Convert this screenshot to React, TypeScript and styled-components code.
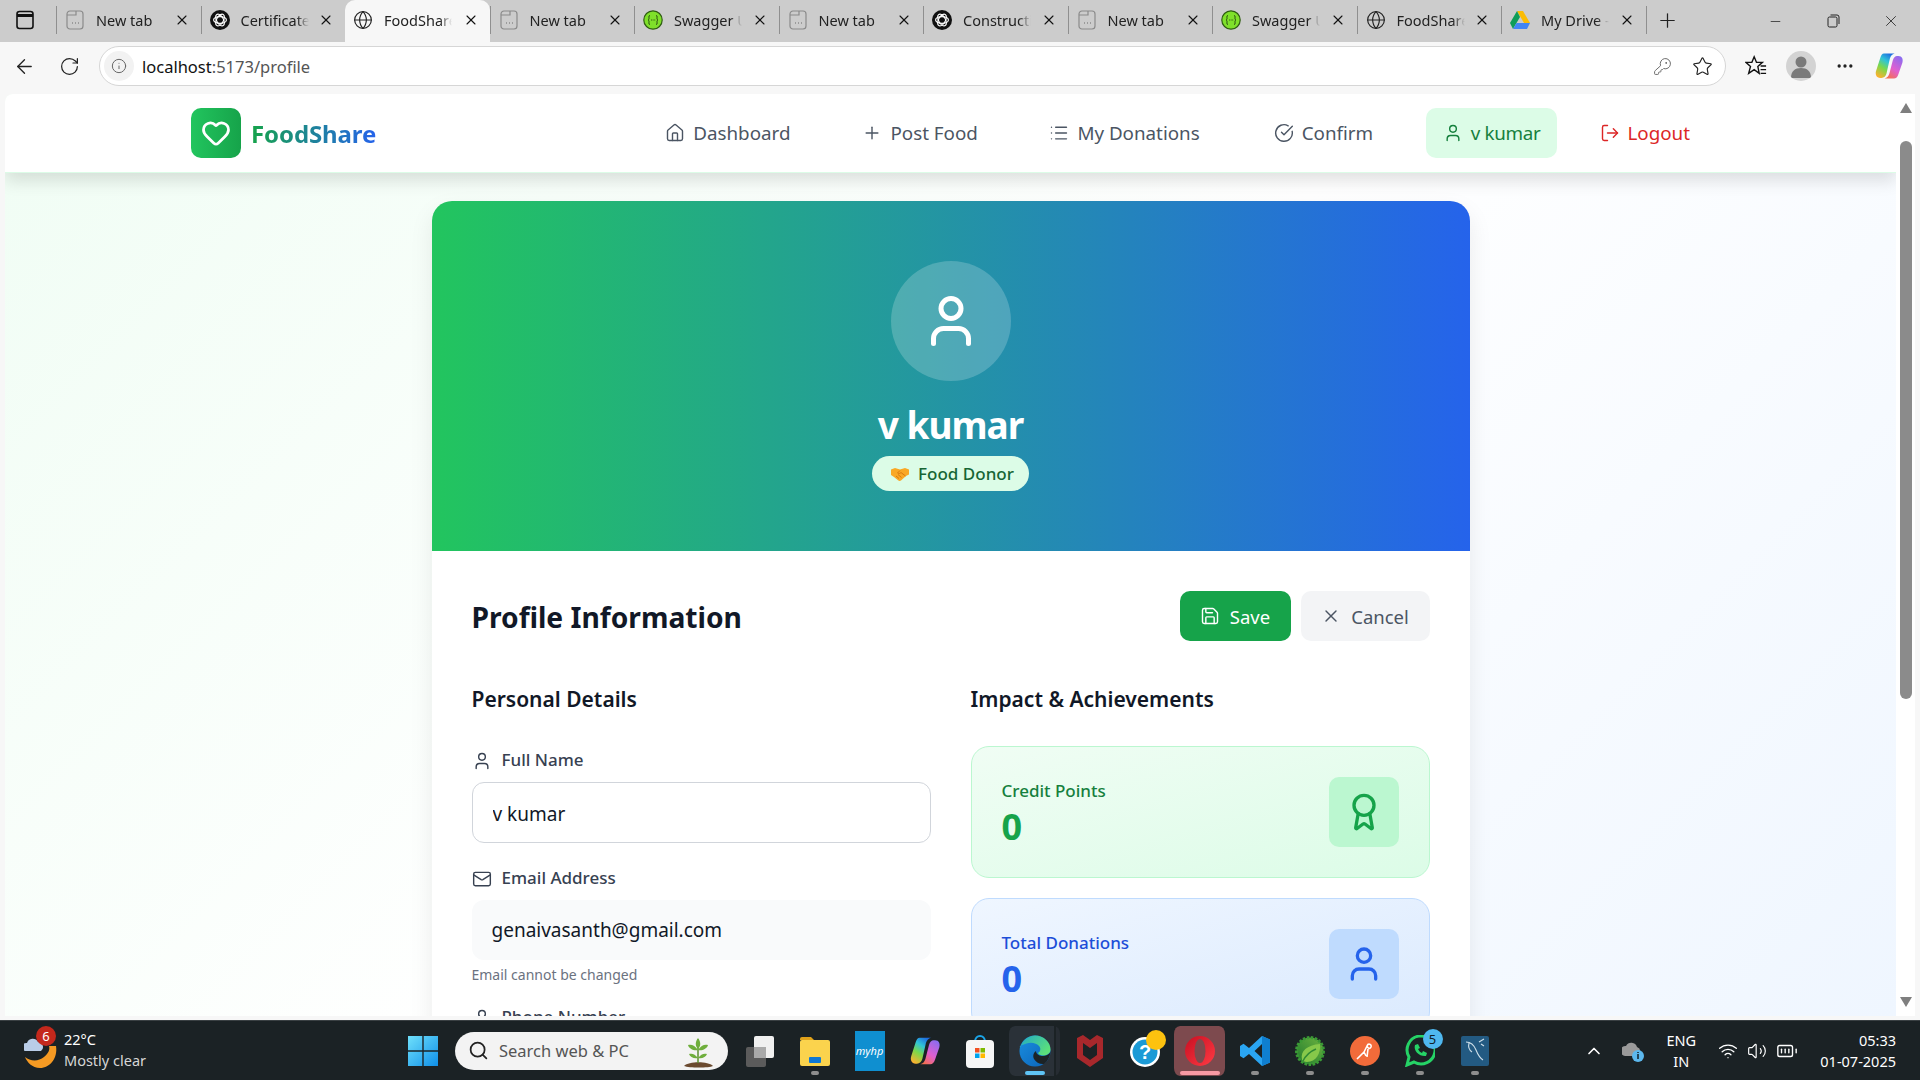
import styled, { createGlobalStyle } from "styled-components";
import {
    ArrowLeft, Award, BatteryFull, ChevronUp, CircleCheckBig, Ellipsis, Globe, Heart, House, Info,
    KeyRound, List, LogOut, Mail, Minus, Plus, RotateCw, Save, Search, Star, User, Volume2, Wifi, X,
} from "lucide-react";
import type { ReactNode } from "react";

const GlobalStyle = createGlobalStyle`
    html, body {
        margin: 0;
        height: 100%;
        overflow: hidden;
        background: #f7f7f7;
        font-family: "Noto Sans", "Liberation Sans", sans-serif;
    }
    * { box-sizing: border-box; }
`;

const DocIcon = () => (
    <svg width="18" height="20" viewBox="0 0 18 20" fill="none" stroke="#8a8a8a" strokeWidth="1.2">
        <rect x="1" y="1" width="16" height="18" rx="3" />
        <path d="M1 5h9V1" />
        <path d="M6 13h1M9 13h1M12 13h1" strokeWidth="1.6" />
    </svg>
);

const OpenAiIcon = () => (
    <svg width="20" height="20" viewBox="0 0 20 20">
        <circle cx="10" cy="10" r="10" fill="#111" />
        <g fill="none" stroke="#fff" strokeWidth="1.2">
            <ellipse cx="10" cy="10" rx="6.4" ry="3.4" />
            <ellipse cx="10" cy="10" rx="6.4" ry="3.4" transform="rotate(60 10 10)" />
            <ellipse cx="10" cy="10" rx="6.4" ry="3.4" transform="rotate(120 10 10)" />
        </g>
    </svg>
);

const SwaggerIcon = () => (
    <svg width="20" height="20" viewBox="0 0 20 20">
        <circle cx="10" cy="10" r="9.2" fill="#7fe02a" stroke="#2f5d12" strokeWidth="1.2" />
        <path d="M7 5.5c-1.5 0-1 2-1 3s-1 1.500-1 1.500 1 .5 1 1.500-.5 3 1 3M13 5.500c1.500 0 1 2 1 3s1 1.500 1 1.500-1 .5-1 1.500.5 3-1 3" fill="none" stroke="#24400f" strokeWidth="1" />
        <path d="M8 10h.8M9.700 10h.8M11.400 10h.8" stroke="#24400f" strokeWidth="1" />
    </svg>
);

const DriveIcon = () => (
    <svg width="20" height="18" viewBox="0 0 20 18">
        <path d="M7 0h6l7 12h-6z" fill="#fbbc04" />
        <path d="M7 0l-7 12 3 6 7-12z" fill="#0f9d58" />
        <path d="M3 18h14l3-6H6.500z" fill="#4285f4" />
    </svg>
);

const CopilotIcon = ({ size }: { size: number }) => (
    <svg width={size} height={size} viewBox="0 0 24 24">
        <defs>
            <linearGradient id={`cpa${size}`} x1="0.7" y1="0" x2="0.2" y2="1">
                <stop offset="0" stopColor="#1f6fe0" />
                <stop offset="0.3" stopColor="#2fc4d8" />
                <stop offset="0.6" stopColor="#7bd84a" />
                <stop offset="1" stopColor="#ffb02e" />
            </linearGradient>
            <linearGradient id={`cpb${size}`} x1="0.8" y1="0" x2="0.2" y2="1">
                <stop offset="0" stopColor="#8a6cf0" />
                <stop offset="0.55" stopColor="#e05fd0" />
                <stop offset="1" stopColor="#f5704a" />
            </linearGradient>
        </defs>
        <path d="M8 2h8.500c-2 .5-3.200 2-3.800 4L10 18c-.5 2-2 3.500-4 3.500H5c-3 0-4.300-3-3.300-5.800L5 5.500C5.600 3.500 6.500 2 8 2z" fill={`url(#cpa${size})`} />
        <path d="M16 22H8.500c2-.5 3.200-2 3.800-4L15 7.500C15.500 5.500 17 4 18.500 4h1c3 0 4 2.700 3.200 5.300L19.500 18.500C19 20.500 17.500 22 16 22z" fill={`url(#cpb${size})`} />
    </svg>
);

const HandshakeIcon = () => (
    <svg width="18" height="14" viewBox="0 0 18 14">
        <path d="M0 2.500 4 1l5 1.500L14 1l4 1.500v5L15 9l-5 4.500c-1 .7-2 .5-3-.2L3 10 0 8z" fill="#f9a825" />
        <path d="M5 9l3 2.500M7 7.500l3.500 3M9 3.500 6.500 6c1 1 2.500.5 3.500-.5l4.500 3.500" fill="none" stroke="#d9790f" strokeWidth="1" />
    </svg>
);

const tabs: { title: string; icon: ReactNode; active?: boolean }[] = [
    { title: "New tab", icon: <DocIcon /> },
    { title: "Certificate", icon: <OpenAiIcon /> },
    { title: "FoodShare", icon: <Globe size={20} strokeWidth={1.4} color="#222" />, active: true },
    { title: "New tab", icon: <DocIcon /> },
    { title: "Swagger UI", icon: <SwaggerIcon /> },
    { title: "New tab", icon: <DocIcon /> },
    { title: "Construction", icon: <OpenAiIcon /> },
    { title: "New tab", icon: <DocIcon /> },
    { title: "Swagger UI", icon: <SwaggerIcon /> },
    { title: "FoodShare", icon: <Globe size={20} strokeWidth={1.4} color="#222" /> },
    { title: "My Drive - Google", icon: <DriveIcon /> },
];

function BrowserChrome() {
    return (
        <>
            <TabStrip>
                <SidebarToggle>
                    <svg width="18" height="20" viewBox="0 0 18 20" fill="none" stroke="#111" strokeWidth="1.6">
                        <rect x="1" y="1.500" width="16" height="17" rx="2.500" />
                        <path d="M1 5.500h16" strokeWidth="3" />
                    </svg>
                </SidebarToggle>
                {tabs.map((tab, i) => (
                    <Tab key={i} $active={tab.active}>
                        <TabIcon>{tab.icon}</TabIcon>
                        <TabTitle>{tab.title}</TabTitle>
                        <TabClose><X size={16} strokeWidth={1.6} /></TabClose>
                    </Tab>
                ))}
                <NewTab><Plus size={23} strokeWidth={1.3} /></NewTab>
                <WindowControls>
                    <WindowButton><Minus size={15} strokeWidth={1.2} /></WindowButton>
                    <WindowButton>
                        <svg width="13" height="14" viewBox="0 0 13 14" fill="none" stroke="#222" strokeWidth="1">
                            <rect x="1" y="3" width="9" height="10" rx="1.500" />
                            <path d="M3.500 1h6.500a2 2 0 0 1 2 2v7" />
                        </svg>
                    </WindowButton>
                    <WindowButton><X size={18} strokeWidth={1.1} /></WindowButton>
                </WindowControls>
            </TabStrip>
            <Toolbar>
                <ToolButton><ArrowLeft size={23} strokeWidth={1.4} /></ToolButton>
                <ToolButton><RotateCw size={21} strokeWidth={1.4} /></ToolButton>
                <AddressBar>
                    <SiteInfo><Info size={16} strokeWidth={1.5} color="#666" /></SiteInfo>
                    <AddressText>localhost<AddressPath>:5173/profile</AddressPath></AddressText>
                    <AddressActions>
                        <KeyRound size={19} strokeWidth={1.2} color="#666" />
                        <Star size={21} strokeWidth={1.3} color="#222" />
                    </AddressActions>
                </AddressBar>
                <ToolIcons>
                    <svg width="22" height="22" viewBox="0 0 24 24" fill="none" stroke="#111" strokeWidth="1.5">
                        <path d="M10 2l2.500 6H19l-5 4.500L15.500 20 10 16l-6 4 2-7.500L1 8h6.500z" />
                        <path d="M17 12h6M17 16h6M17 20h6" />
                    </svg>
                    <Avatar>
                        <svg width="30" height="30" viewBox="0 0 30 30">
                            <circle cx="15" cy="11" r="5.500" fill="#7a7a7a" />
                            <path d="M5 27c0-7 4-10 10-10s10 3 10 10z" fill="#7a7a7a" />
                        </svg>
                    </Avatar>
                    <Ellipsis size={20} color="#222" />
                    <CopilotIcon size={30} />
                </ToolIcons>
            </Toolbar>
        </>
    );
}

function NavBar() {
    return (
        <Nav>
            <Brand>
                <BrandMark><Heart size={30} color="#fff" strokeWidth={2.2} /></BrandMark>
                <BrandName>FoodShare</BrandName>
            </Brand>
            <NavLinks>
                <NavLink $shift={0}><House size={20} strokeWidth={1.7} />Dashboard</NavLink>
                <NavLink $shift={0}><Plus size={20} strokeWidth={1.7} />Post Food</NavLink>
                <NavLink $shift={-0.5}><List size={20} strokeWidth={1.7} />My Donations</NavLink>
                <NavLink $shift={2}><CircleCheckBig size={20} strokeWidth={1.7} />Confirm</NavLink>
                <NavLink $shift={-1} $current><User size={20} strokeWidth={1.7} />v kumar</NavLink>
                <NavLink $shift={-11.5} $danger><LogOut size={20} strokeWidth={1.7} />Logout</NavLink>
            </NavLinks>
        </Nav>
    );
}

function ProfileCard() {
    return (
        <Card>
            <Hero>
                <HeroAvatar><User size={60} color="#fff" strokeWidth={2} /></HeroAvatar>
                <HeroName>v kumar</HeroName>
                <RoleBadge><HandshakeIcon />Food Donor</RoleBadge>
            </Hero>
            <CardBody>
                <InfoHead>
                    <InfoTitle>Profile Information</InfoTitle>
                    <Actions>
                        <SaveButton><Save size={20} strokeWidth={1.7} />Save</SaveButton>
                        <CancelButton><X size={20} strokeWidth={1.7} />Cancel</CancelButton>
                    </Actions>
                </InfoHead>
                <Columns>
                    <Column>
                        <SectionTitle>Personal Details</SectionTitle>
                        <Field>
                            <FieldLabel><User size={20} strokeWidth={1.7} />Full Name</FieldLabel>
                            <TextInput readOnly value="v kumar" />
                        </Field>
                        <Field>
                            <FieldLabel><Mail size={20} strokeWidth={1.7} />Email Address</FieldLabel>
                            <TextInput readOnly disabled value="genaivasanth@gmail.com" />
                            <Hint>Email cannot be changed</Hint>
                        </Field>
                        <Field>
                            <FieldLabel><User size={20} strokeWidth={1.7} />Phone Number</FieldLabel>
                        </Field>
                    </Column>
                    <Column>
                        <SectionTitle>Impact &amp; Achievements</SectionTitle>
                        <StatList>
                            <StatCard $tone="green">
                                <StatText>
                                    <StatLabel $tone="green">Credit Points</StatLabel>
                                    <StatValue $tone="green">0</StatValue>
                                </StatText>
                                <StatIcon $tone="green"><Award size={40} strokeWidth={2} /></StatIcon>
                            </StatCard>
                            <StatCard $tone="blue">
                                <StatText>
                                    <StatLabel $tone="blue">Total Donations</StatLabel>
                                    <StatValue $tone="blue">0</StatValue>
                                </StatText>
                                <StatIcon $tone="blue"><User size={40} strokeWidth={2} /></StatIcon>
                            </StatCard>
                        </StatList>
                    </Column>
                </Columns>
            </CardBody>
        </Card>
    );
}

function Taskbar() {
    return (
        <Bar>
            <Weather>
                <WeatherIcon>
                    <svg width="34" height="38" viewBox="0 0 34 38">
                        <path d="M32 14c2 12-6 22-16 22C8 36 3 30 1 25c5 4 13 5 19 0 5-4 6-8 5-11z" fill="#f59a23" />
                        <path d="M2 19a4 4 0 0 1 1-8 6 6 0 0 1 11-1 5 5 0 0 1 3 9z" fill="#b9cde8" />
                    </svg>
                    <CountBadge $color="#c4281c">6</CountBadge>
                </WeatherIcon>
                <WeatherText>
                    <span>22°C</span>
                    <WeatherNote>Mostly clear</WeatherNote>
                </WeatherText>
            </Weather>
            <TaskSlot>
                <svg width="30" height="30" viewBox="0 0 30 30">
                    <defs>
                        <linearGradient id="win" x1="0" y1="0" x2="1" y2="1">
                            <stop offset="0" stopColor="#6fe0fb" />
                            <stop offset="1" stopColor="#0f8fe8" />
                        </linearGradient>
                    </defs>
                    <path d="M0 0h14.300v14.300H0zM15.700 0H30v14.300H15.700zM0 15.700h14.300V30H0zM15.700 15.700H30V30H15.700z" fill="url(#win)" />
                </svg>
            </TaskSlot>
            <SearchPill>
                <Search size={21} strokeWidth={2} color="#222" />
                <SearchText>Search web &amp; PC</SearchText>
                <svg width="36" height="36" viewBox="0 0 36 36">
                    <path d="M4 33c5-5 24-5 29 0-4 2-24 2-29 0z" fill="#6b4a2f" />
                    <path d="M18 30V6" stroke="#5c8f2f" strokeWidth="1.500" />
                    <path d="M18 5c-3 4-3 8 0 11 3-3 3-7 0-11zM18 17c-3-5-7-6-10-5 1 4 6 6 10 5zM18 17c3-5 7-6 10-5-1 4-6 6-10 5zM18 25c-3-4-6-5-9-4 1 3 5 5 9 4zM18 25c3-4 6-5 9-4-1 3-5 5-9 4z" fill="#6fae3c" />
                </svg>
            </SearchPill>
            <TaskSlot>
                <svg width="30" height="32" viewBox="0 0 30 32">
                    <rect x="1" y="12" width="20" height="20" rx="2" fill="#5b5b5b" />
                    <rect x="9" y="1" width="20" height="22" rx="2" fill="#f0f0f0" />
                    <rect x="9" y="12" width="12" height="11" fill="#a9a9a9" />
                </svg>
            </TaskSlot>
            <TaskSlot $dot>
                <svg width="30" height="30" viewBox="0 0 30 30">
                    <path d="M0 3a2 2 0 0 1 2-2h9l3 3h-14z" fill="#e0a21a" />
                    <rect y="4" width="30" height="26" rx="2" fill="#fbd34d" />
                    <rect x="9" y="21" width="12" height="6" rx="1" fill="#0f78d4" />
                </svg>
            </TaskSlot>
            <TaskSlot>
                <HpTile>myhp</HpTile>
            </TaskSlot>
            <TaskSlot><CopilotIcon size={32} /></TaskSlot>
            <TaskSlot>
                <svg width="28" height="34" viewBox="0 0 28 34">
                    <path d="M9 8c0-8 10-8 10 0" fill="none" stroke="#1aa5e8" strokeWidth="2" />
                    <rect y="6" width="28" height="28" rx="4" fill="#f6f6f6" />
                    <path d="M9 14h4.500v4.500H9z" fill="#f25022" />
                    <path d="M14.500 14H19v4.500h-4.500z" fill="#7fba00" />
                    <path d="M9 19.500h4.500V24H9z" fill="#00a4ef" />
                    <path d="M14.500 19.500H19V24h-4.500z" fill="#ffb900" />
                </svg>
            </TaskSlot>
            <TaskSlot $box="linear-gradient(to right, #2a3138 0 45px, #1b2225 45px 47px, #262c32 47px 100%)" $bar="#5fc4f5" $barWidth={20}>
                <svg width="32" height="32" viewBox="0 0 32 32">
                    <defs>
                        <linearGradient id="edgeBlue" x1="0" y1="0" x2="1" y2="1">
                            <stop offset="0" stopColor="#1a8fe0" />
                            <stop offset="1" stopColor="#0b63b8" />
                        </linearGradient>
                        <linearGradient id="edgeGreen" x1="0" y1="0" x2="1" y2="0.600">
                            <stop offset="0" stopColor="#1fa8c8" />
                            <stop offset="1" stopColor="#5ce07a" />
                        </linearGradient>
                    </defs>
                    <circle cx="16" cy="16" r="15.500" fill="url(#edgeBlue)" />
                    <path d="M1.500 12C4 4 11 .500 16 .500c9 0 15.500 7 15.500 14 0 3.500-3 6-7 6-3 0-5-1-5.500-2.500 2.500-1.500 3-4.500 1.500-6.500-3-4-9-4.500-13-3-3 1-6 2-7 3.500z" fill="url(#edgeGreen)" />
                    <path d="M31.500 17c-2 3.500-7 5-11 3.500-2-.8-3.500-2.500-3.500-4.500-2.500 1.500-3.500 5-2 8 2 3.500 6 5.500 10 5 3.500-2.500 5.800-7 6.500-12z" fill="#1c2326" />
                </svg>
            </TaskSlot>
            <TaskSlot>
                <svg width="26" height="32" viewBox="0 0 26 32">
                    <path d="M0 3 6 0l7 5 7-5 6 3v20L13 32 0 23zM6 8v12l7 5 7-5V8l-7 5z" fill="#a8282c" />
                </svg>
            </TaskSlot>
            <TaskSlot>
                <HelpIcon>
                    <svg width="30" height="32" viewBox="0 0 30 32">
                        <circle cx="15" cy="17" r="15" fill="#fff" />
                        <circle cx="15" cy="17" r="12.500" fill="#1b9ad6" />
                        <text x="15" y="24" textAnchor="middle" fontSize="20" fontWeight="700" fontFamily="Liberation Sans" fill="#fff">?</text>
                    </svg>
                    <HelpDot />
                </HelpIcon>
            </TaskSlot>
            <TaskSlot $box="#7d4a4e" $bar="#f79aa4" $barWidth={40}>
                <svg width="30" height="30" viewBox="0 0 30 30">
                    <defs>
                        <linearGradient id="opera" x1="0" y1="0" x2="1" y2="1">
                            <stop offset="0" stopColor="#c80f22" />
                            <stop offset="1" stopColor="#ff3b44" />
                        </linearGradient>
                    </defs>
                    <circle cx="15" cy="15" r="15" fill="url(#opera)" />
                    <ellipse cx="15" cy="15" rx="5.500" ry="12" fill="#7d4a4e" />
                </svg>
            </TaskSlot>
            <TaskSlot $dot>
                <svg width="30" height="30" viewBox="0 0 30 30">
                    <path d="M22 0l8 3.500v23L22 30 9 18l-5.500 4.200L0 20v-10l3.500-2.200L9 12zM22 8l-7.500 7 7.500 7z" fill="#2aa5f2" />
                    <path d="M22 0l8 3.500v23L22 30z" fill="#0f7fd0" />
                </svg>
            </TaskSlot>
            <TaskSlot $dot>
                <svg width="30" height="30" viewBox="0 0 30 30">
                    <defs>
                        <linearGradient id="spring" x1="1" y1="0" x2="0" y2="1">
                            <stop offset="0" stopColor="#6cb33f" />
                            <stop offset="1" stopColor="#1f7a2e" />
                        </linearGradient>
                    </defs>
                    <circle cx="15" cy="15" r="13.500" fill="url(#spring)" stroke="#3a9a35" strokeWidth="3" strokeDasharray="2.500 1.500" />
                    <path d="M7 24c-2-9 5-15 18-16 1 9-4 18-13 18-2 0-4-1-5-2z" fill="#86c84a" />
                    <path d="M8 25c3-6 8-10 13-12" stroke="#2f8a34" strokeWidth="1.500" fill="none" />
                </svg>
            </TaskSlot>
            <TaskSlot $dot>
                <svg width="30" height="30" viewBox="0 0 30 30">
                    <circle cx="15" cy="15" r="15" fill="#f26b3a" />
                    <path d="M7 23l7-7 3-6M17 10c1-3 5-2 4 1-1 2-3 2-4-1zM14 16l2 4M18 13l-1 8" stroke="#fff" strokeWidth="1.600" fill="none" />
                </svg>
            </TaskSlot>
            <TaskSlot $dot>
                <WhatsAppIcon>
                    <svg width="30" height="32" viewBox="0 0 30 32">
                        <path d="M2 30l2-8A14 14 0 1 1 9 27z" fill="none" stroke="#25d366" strokeWidth="3" />
                        <path d="M10 10c-2 6 5 12 11 11l1-3-4-2-1 2c-2-1-3-2-4-4l2-1-2-4z" fill="#25d366" />
                    </svg>
                    <CountBadge $color="#4fb8f0" $dark>5</CountBadge>
                </WhatsAppIcon>
            </TaskSlot>
            <TaskSlot $dot>
                <svg width="28" height="30" viewBox="0 0 28 30">
                    <rect width="28" height="30" rx="2" fill="#235a82" />
                    <path d="M5 6c5 0 8 3 10 8s4 8 7 10M8 7c-1 4 0 7 3 9M18 6l5-3M20 8l3 2" stroke="#cfe0ea" strokeWidth="1.100" fill="none" />
                </svg>
            </TaskSlot>
            <Tray>
                <ChevronUp size={20} color="#fff" strokeWidth={2} />
                <CloudInfo>
                    <svg width="24" height="24" viewBox="0 0 24 24">
                        <path d="M3 17a5 5 0 0 1 1-10 6 6 0 0 1 11 1 5 5 0 0 1 1 9z" fill="#9a9a9a" />
                        <circle cx="16" cy="17" r="6" fill="#5cb8ee" />
                        <path d="M16 15v5M16 13v1" stroke="#10202a" strokeWidth="1.500" />
                    </svg>
                </CloudInfo>
                <Lang>ENG<br />IN</Lang>
                <TrayIcons>
                    <Wifi size={20} color="#fff" strokeWidth={1.6} />
                    <Volume2 size={20} color="#fff" strokeWidth={1.4} />
                    <BatteryFull size={22} color="#fff" strokeWidth={1.5} />
                </TrayIcons>
                <Clock>05:33<br />01-07-2025</Clock>
            </Tray>
        </Bar>
    );
}

export default function App() {
    return (
        <>
            <GlobalStyle />
            <Screen>
                <BrowserChrome />
                <Viewport>
                    <Page>
                        <NavBar />
                        <Content><ProfileCard /></Content>
                    </Page>
                    <ScrollTrack>
                        <ScrollArrow $up />
                        <ScrollThumb />
                        <ScrollArrow />
                    </ScrollTrack>
                </Viewport>
                <Taskbar />
            </Screen>
        </>
    );
}

const Screen = styled.div`
    width: 1920px;
    height: 1080px;
    display: flex;
    flex-direction: column;
    overflow: hidden;
    background: #f7f7f7;
`;

/* browser chrome */
const TabStrip = styled.div`
    height: 42px;
    flex: none;
    display: flex;
    align-items: center;
    background: #cccccc;
`;

const SidebarToggle = styled.div`
    width: 56px;
    height: 100%;
    display: flex;
    align-items: center;
    justify-content: center;
    padding: 0 7px 2px 0;
`;

const Tab = styled.div<{ $active?: boolean }>`
    width: 144.500px;
    height: ${p => (p.$active ? "42px" : "28px")};
    display: flex;
    align-items: center;
    padding: 0 11px ${p => (p.$active ? "2px" : "0")} 8px;
    margin-bottom: ${p => (p.$active ? "0" : "2px")};
    color: #222;
    border-left: ${p => (p.$active ? "none" : "1px solid #8f8f8f")};
    background: ${p => (p.$active ? "#f7f7f7" : "transparent")};
    border-radius: ${p => (p.$active ? "10px 10px 0 0" : "0")};
`;

const TabIcon = styled.div`
    width: 20px;
    display: flex;
    justify-content: center;
    flex: none;
`;

const TabTitle = styled.div`
    width: 68px;
    margin-left: 11px;
    font-size: 14.500px;
    white-space: nowrap;
    overflow: hidden;
    mask-image: linear-gradient(to right, #000 82%, transparent 100%);
`;

const TabClose = styled.div`
    margin-left: auto;
    display: flex;
    color: #111;
`;

const NewTab = styled.div`
    width: 43px;
    height: 28px;
    margin-bottom: 2px;
    border-left: 1px solid #8f8f8f;
    display: flex;
    align-items: center;
    justify-content: center;
    color: #222;
`;

const WindowControls = styled.div`
    margin-left: auto;
    display: flex;
`;

const WindowButton = styled.div`
    width: 58px;
    display: flex;
    justify-content: center;
    align-items: center;
    color: #222;
`;

const Toolbar = styled.div`
    height: 52px;
    flex: none;
    display: flex;
    align-items: center;
    padding: 0 0 4px 2px;
    background: #f7f7f7;
`;

const ToolButton = styled.div`
    width: 45px;
    display: flex;
    justify-content: center;
    color: #222;
`;

const AddressBar = styled.div`
    width: 1627px;
    height: 40px;
    margin-left: 7px;
    padding-left: 4px;
    display: flex;
    align-items: center;
    background: #fff;
    border: 1px solid #d6d6d6;
    border-radius: 20px;
`;

const SiteInfo = styled.div`
    width: 30px;
    height: 30px;
    border-radius: 50%;
    background: #f2f2f2;
    display: flex;
    align-items: center;
    justify-content: center;
`;

const AddressText = styled.div`
    margin-left: 8px;
    padding-top: 1px;
    font-size: 16.500px;
    color: #111;
`;

const AddressPath = styled.span`
    color: #555;
`;

const AddressActions = styled.div`
    margin-left: auto;
    padding-right: 12px;
    display: flex;
    align-items: center;
    gap: 20px;
`;

const ToolIcons = styled.div`
    margin-left: 19px;
    display: flex;
    align-items: center;
    gap: 19px;
`;

const Avatar = styled.div`
    width: 30px;
    height: 30px;
    border-radius: 50%;
    overflow: hidden;
    background: #d3d3d3;
`;

/* page viewport */
const Viewport = styled.div`
    height: 922px;
    flex: none;
    display: flex;
    padding-left: 5px;
`;

const Page = styled.div`
    width: 1891px;
    height: 100%;
    overflow: hidden;
    border-radius: 8px 0 0 0;
    background: linear-gradient(135deg, #f0fdf4 0%, #ffffff 50%, #eff6ff 100%);
`;

const ScrollTrack = styled.div`
    width: 19px;
    display: flex;
    flex-direction: column;
    align-items: center;
    padding-top: 9px;
    background: #fff;
`;

const ScrollArrow = styled.div<{ $up?: boolean }>`
    width: 0;
    height: 0;
    flex: none;
    border-left: 6px solid transparent;
    border-right: 6px solid transparent;
    ${p => (p.$up ? "border-bottom: 10px solid #7f7f7f;" : "border-top: 10px solid #7f7f7f;")}
    ${p => (p.$up ? "" : "margin-top: 298px;")}
`;

const ScrollThumb = styled.div`
    width: 12px;
    height: 558px;
    flex: none;
    margin-top: 28px;
    border-radius: 6px;
    background: #8b8b8b;
`;

const Nav = styled.nav`
    height: 79px;
    display: flex;
    align-items: center;
    padding: 0 0 0 186px;
    background: #fff;
    border-bottom: 1px solid #dcfce7;
    box-shadow: 0 8px 16px rgba(0, 0, 0, 0.12);
    position: relative;
`;

const Brand = styled.div`
    display: flex;
    align-items: center;
    gap: 10px;
`;

const BrandMark = styled.div`
    width: 50px;
    height: 50px;
    border-radius: 10px;
    display: flex;
    align-items: center;
    justify-content: center;
    background: linear-gradient(to right, #22c55e, #16a34a);
`;

const BrandName = styled.div`
    font-size: 24px;
    font-weight: 700;
    letter-spacing: -0.100px;
    background: linear-gradient(to right, #16a34a, #2563eb);
    -webkit-background-clip: text;
    background-clip: text;
    color: transparent;
`;

const NavLinks = styled.div`
    margin-left: 271px;
    display: flex;
    align-items: center;
    gap: 36px;
`;

const NavLink = styled.div<{ $current?: boolean; $danger?: boolean; $shift: number }>`
    height: 50px;
    display: flex;
    align-items: center;
    gap: 8px;
    padding: 0 ${p => (p.$current ? "16.500px" : "18px")};
    margin-left: ${p => p.$shift}px;
    font-size: 18.800px;
    border-radius: 10px;
    letter-spacing: ${p => (p.$current ? "-0.300px" : "0")};
    color: ${p => (p.$current ? "#15803d" : p.$danger ? "#dc2626" : "#4b5563")};
    background: ${p => (p.$current ? "#dcfce7" : "transparent")};
`;

const Content = styled.main`
    padding-top: 28px;
    display: flex;
    justify-content: center;
`;

const Card = styled.div`
    width: 1038px;
    border-radius: 20px;
    overflow: hidden;
    background: #fff;
    box-shadow: 0 10px 24px rgba(0, 0, 0, 0.08);
`;

const Hero = styled.section`
    height: 350px;
    padding-top: 60px;
    display: flex;
    flex-direction: column;
    align-items: center;
    background: linear-gradient(to right, #22c55e, #2563eb);
`;

const HeroAvatar = styled.div`
    width: 120px;
    height: 120px;
    border-radius: 50%;
    display: flex;
    align-items: center;
    justify-content: center;
    background: rgba(255, 255, 255, 0.2);
`;

const HeroName = styled.h1`
    margin: 19px 0 6px;
    height: 50px;
    line-height: 50px;
    font-size: 37px;
    font-weight: 700;
    letter-spacing: -1px;
    color: #fff;
`;

const RoleBadge = styled.div`
    height: 35px;
    padding: 0 15px 0 19px;
    display: flex;
    align-items: center;
    gap: 9px;
    border-radius: 18px;
    font-size: 17px;
    font-weight: 500;
    color: #166534;
    background: #dcfce7;
`;

const CardBody = styled.section`
    padding: 40px;
`;

const InfoHead = styled.div`
    display: flex;
    align-items: center;
    justify-content: space-between;
    margin-bottom: 40px;
`;

const InfoTitle = styled.h2`
    margin: 0;
    padding-top: 1px;
    font-size: 28.200px;
    font-weight: 700;
    color: #111827;
`;

const Actions = styled.div`
    display: flex;
    gap: 10px;
`;

const SaveButton = styled.button`
    height: 50px;
    width: 111px;
    display: flex;
    align-items: center;
    justify-content: center;
    gap: 10px;
    border: none;
    border-radius: 10px;
    font: inherit;
    font-size: 18.500px;
    color: #fff;
    background: #16a34a;
`;

const CancelButton = styled(SaveButton)`
    width: 129px;
    color: #4b5563;
    background: #f3f4f6;
`;

const Columns = styled.div`
    display: grid;
    grid-template-columns: 459px 459px;
    gap: 40px;
`;

const Column = styled.div`
    display: flex;
    flex-direction: column;
`;

const SectionTitle = styled.h3`
    margin: 0 0 29px;
    height: 36px;
    line-height: 36px;
    font-size: 21px;
    font-weight: 600;
    color: #111827;
`;

const Field = styled.div`
    margin-bottom: 21px;
`;

const FieldLabel = styled.label`
    height: 28px;
    margin-bottom: 8px;
    padding-bottom: 2px;
    display: flex;
    align-items: center;
    gap: 10px;
    font-size: 17px;
    font-weight: 500;
    color: #374151;
    svg { margin-top: 4px; }
`;

const TextInput = styled.input`
    display: block;
    width: 100%;
    height: 61px;
    padding: 2px 20px 0;
    font: inherit;
    font-size: 19px;
    color: #111827;
    outline: none;
    border: 1.500px solid #d1d5db;
    border-radius: 12px;
    background: #fff;
    &:disabled {
        height: 60px;
        padding-top: 0;
        border: none;
        background: #f9fafb;
        opacity: 1;
    }
`;

const Hint = styled.div`
    margin: 6px 0 -2px;
    line-height: 18px;
    font-size: 14px;
    color: #6b7280;
`;

const StatList = styled.div`
    display: flex;
    flex-direction: column;
    gap: 20px;
`;

const StatCard = styled.div<{ $tone: "green" | "blue" }>`
    height: 132px;
    flex: none;
    padding: 0 30px;
    display: flex;
    align-items: center;
    justify-content: space-between;
    border-radius: 18px;
    border: 1px solid ${p => (p.$tone === "green" ? "#bbf7d0" : "#bfdbfe")};
    background: ${p =>
        p.$tone === "green"
            ? "linear-gradient(to bottom right, #f0fdf4, #dcfce7)"
            : "linear-gradient(to bottom right, #eff6ff, #dbeafe)"};
`;

const StatText = styled.div`
    padding-top: 3px;
`;

const StatLabel = styled.div<{ $tone: "green" | "blue" }>`
    font-size: 17px;
    font-weight: 500;
    color: ${p => (p.$tone === "green" ? "#15803d" : "#1d4ed8")};
`;

const StatValue = styled.div<{ $tone: "green" | "blue" }>`
    margin-top: 3px;
    font-size: 36px;
    line-height: 44px;
    font-weight: 700;
    color: ${p => (p.$tone === "green" ? "#16a34a" : "#2563eb")};
`;

const StatIcon = styled.div<{ $tone: "green" | "blue" }>`
    width: 70px;
    height: 70px;
    display: flex;
    align-items: center;
    justify-content: center;
    border-radius: 10px;
    color: ${p => (p.$tone === "green" ? "#16a34a" : "#2563eb")};
    background: ${p => (p.$tone === "green" ? "#bbf7d0" : "#bfdbfe")};
`;

/* windows taskbar */
const Bar = styled.footer`
    height: 60px;
    flex: none;
    margin-top: 4px;
    display: flex;
    align-items: center;
    background: #1b2225;
    border-top: 1px solid #3a4043;
    color: #fff;
`;

const Weather = styled.div`
    width: 395px;
    flex: none;
    padding-left: 24px;
    display: flex;
    align-items: center;
    gap: 6px;
`;

const WeatherIcon = styled.div`
    position: relative;
    display: flex;
`;

const WeatherText = styled.div`
    display: flex;
    flex-direction: column;
    padding-bottom: 2px;
    font-size: 14.500px;
    line-height: 21px;
`;

const WeatherNote = styled.span`
    color: #d6d6d6;
`;

const CountBadge = styled.span<{ $color: string; $dark?: boolean }>`
    position: absolute;
    top: -6px;
    right: ${p => (p.$dark ? "-8px" : "2px")};
    width: 20px;
    height: 20px;
    border-radius: 50%;
    display: flex;
    align-items: center;
    justify-content: center;
    font-size: 13px;
    color: ${p => (p.$dark ? "#10202a" : "#fff")};
    background: ${p => p.$color};
`;

const TaskSlot = styled.div<{ $dot?: boolean; $box?: string; $bar?: string; $barWidth?: number }>`
    position: relative;
    width: 55px;
    height: 50px;
    flex: none;
    display: flex;
    align-items: center;
    justify-content: center;
    border-left: 2.500px solid transparent;
    border-right: 2.500px solid transparent;
    border-radius: 8px;
    background: ${p => p.$box ?? "transparent"};
    background-clip: padding-box;
    ${p => p.$dot && `&::after {
        content: "";
        position: absolute;
        bottom: 1px;
        left: 50%;
        width: 8px;
        height: 4px;
        margin-left: -4px;
        border-radius: 2px;
        background: #8e8e8e;
    }`}
    ${p => p.$bar && `&::after {
        content: "";
        position: absolute;
        bottom: 1px;
        left: 50%;
        width: ${p.$barWidth}px;
        height: 4px;
        margin-left: ${-(p.$barWidth ?? 0) / 2}px;
        border-radius: 2px;
        background: ${p.$bar};
    }`}
`;

const SearchPill = styled.div`
    width: 273px;
    height: 38px;
    flex: none;
    margin: 0 4px 0 5px;
    padding: 0 12px 0 13px;
    display: flex;
    align-items: center;
    gap: 10px;
    border-radius: 19px;
    background: #f3f3f3;
`;

const SearchText = styled.span`
    flex: 1;
    font-size: 16.500px;
    color: #555;
`;

const HpTile = styled.div`
    width: 30px;
    height: 40px;
    display: flex;
    align-items: center;
    justify-content: center;
    font-size: 11px;
    font-style: italic;
    color: #fff;
    background: #0f8fd0;
`;

const HelpIcon = styled.div`
    position: relative;
    display: flex;
`;

const HelpDot = styled.span`
    position: absolute;
    top: -5px;
    right: -6px;
    width: 20px;
    height: 20px;
    border-radius: 50%;
    background: #fdc20f;
`;

const WhatsAppIcon = styled.div`
    position: relative;
    display: flex;
`;

const Tray = styled.div`
    margin-left: auto;
    padding-right: 24px;
    display: flex;
    align-items: center;
`;

const CloudInfo = styled.div`
    display: flex;
    margin-left: 18px;
`;

const Lang = styled.div`
    margin-left: 17px;
    width: 36px;
    text-align: center;
    font-size: 14.500px;
    line-height: 21px;
`;

const TrayIcons = styled.div`
    margin-left: 19px;
    display: flex;
    align-items: center;
    gap: 9px;
`;

const Clock = styled.div`
    margin-left: 22px;
    text-align: right;
    font-size: 14.500px;
    line-height: 21px;
`;
